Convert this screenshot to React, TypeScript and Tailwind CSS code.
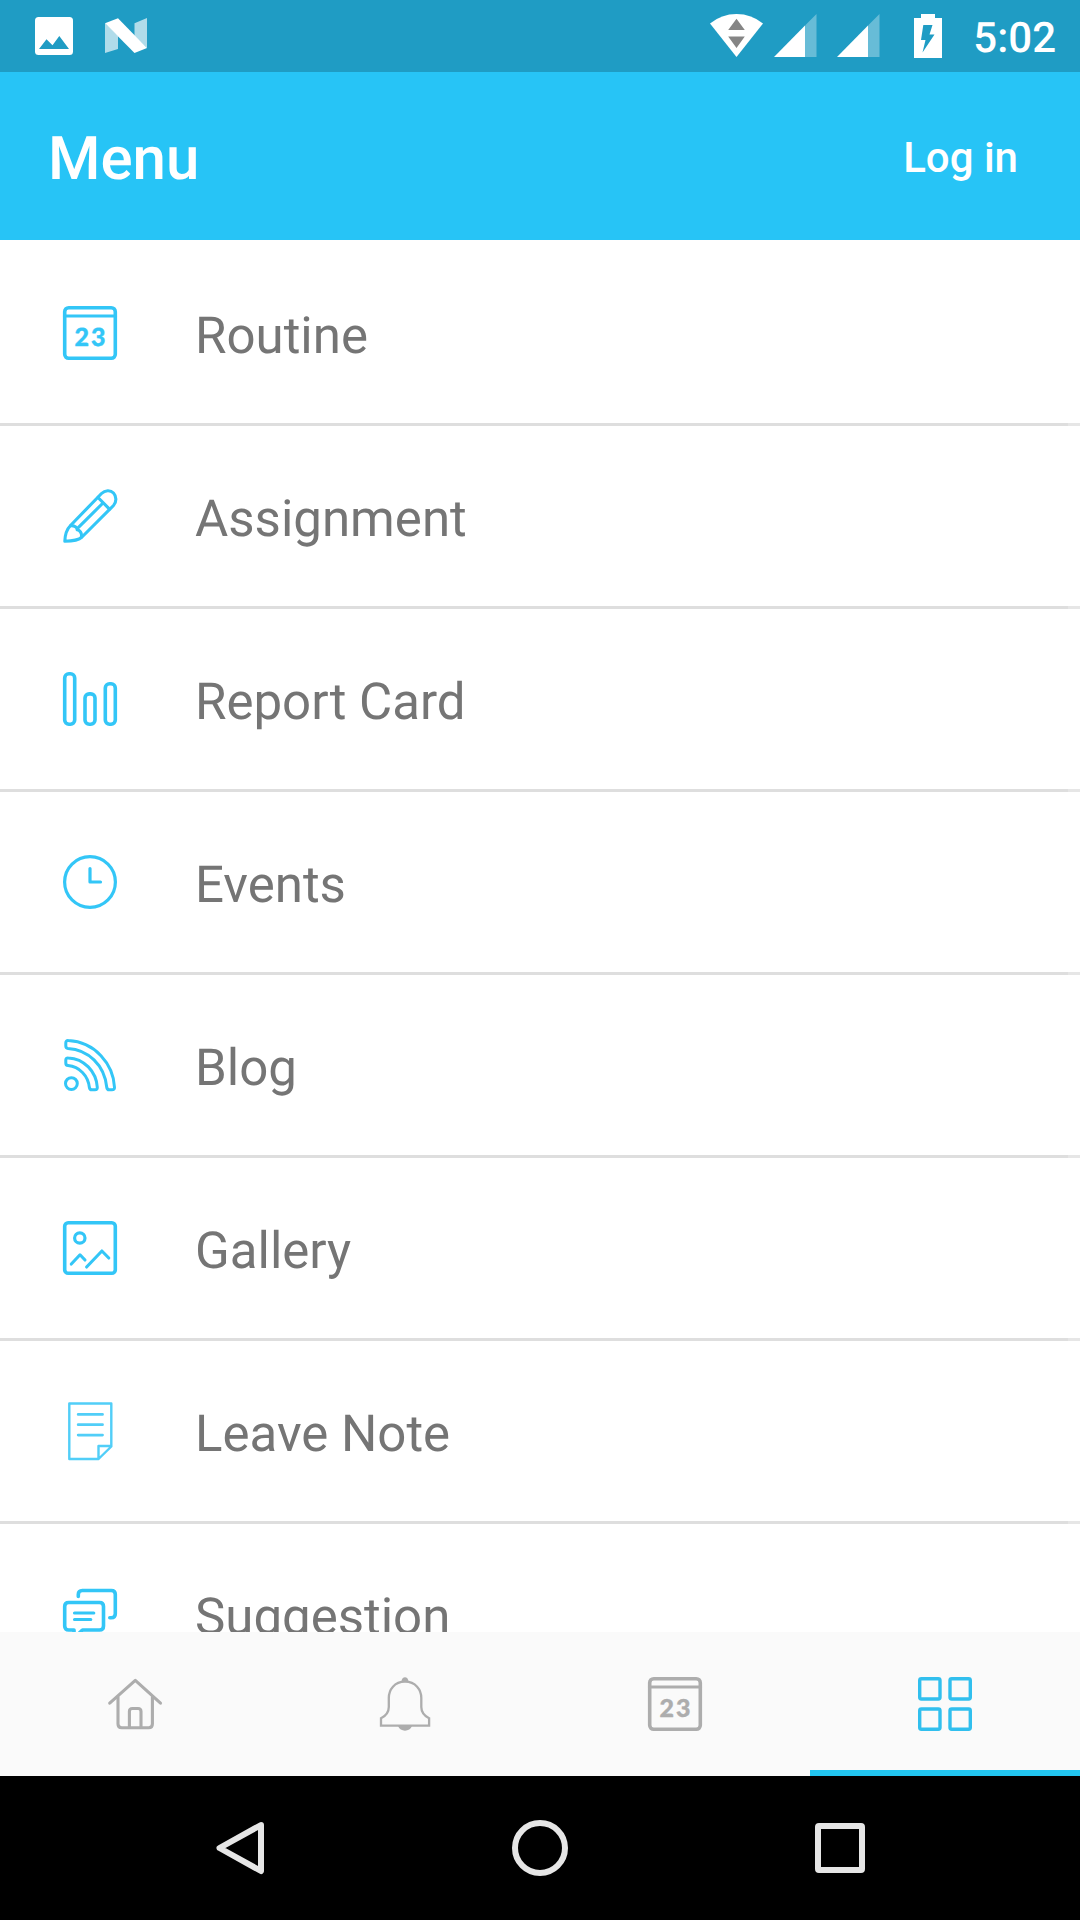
import type { ReactNode } from "react";

type IconProps = { width?: number; children: ReactNode; className?: string };

function Icon({ width = 3.6, children, className = "" }: IconProps) {
  return (
    <svg
      viewBox="0 0 60 60"
      className={`h-[60px] w-[60px] shrink-0 ${className}`}
      fill="none"
      stroke="currentColor"
      strokeWidth={width}
      strokeLinecap="round"
      strokeLinejoin="round"
    >
      {children}
    </svg>
  );
}

const CalendarIcon = () => (
  <Icon>
    <rect x="4.7" y="4.7" width="50.6" height="50.6" rx="4" />
    <path d="M4.5 13H55.5" strokeWidth="3.2" />
    <text
      x="14.4"
      y="43.3"
      fontSize="25"
      fontWeight="900"
      letterSpacing="2.2"
      fontFamily="Lato, sans-serif"
      fill="currentColor"
      strokeWidth="0.4"
    >
      23
    </text>
  </Icon>
);

const PencilIcon = () => (
  <Icon width={3.1}>
    <path d="M10.5 39.5 41.5 7.5C45 4 50.5 3.8 53.5 7S56.8 16 53.5 19.5L22 51C19 53.8 11 55.2 4.8 55.3C5 49.5 7 43 10.5 39.5Z" />
    <path d="M38 11.5 49.5 23.2M43 17 17 42.8M10.5 39.7C14.5 39.5 17 41 17.2 43.8C20.2 44.5 21.8 47 21.6 51" />
  </Icon>
);

const BarsIcon = () => (
  <Icon>
    <rect x="4.7" y="4.7" width="10" height="50.6" rx="4.2" />
    <rect x="25" y="24.9" width="10" height="30.4" rx="4.2" />
    <rect x="45.3" y="14.8" width="10" height="40.5" rx="4.2" />
  </Icon>
);

const ClockIcon = () => (
  <Icon width={3.2}>
    <circle cx="30" cy="30" r="25.4" />
    <path d="M30 16.5V30H40.5" />
  </Icon>
);

const FeedIcon = () => (
  <Icon width={3}>
    <circle cx="11.4" cy="48.6" r="5.9" />
    <path d="M8.3 5.6C35 7 53.3 29 54.5 52.3Q54.6 54.8 52 54.8H49.2Q47 54.8 46.7 52C44.5 30 28 14.5 8 13.4Q5.8 13.2 5.8 11V7.8Q5.8 5.4 8.3 5.6Z" />
    <path d="M8.3 22.9C24 23.5 36.3 36.5 37.3 52.3Q37.4 54.8 35 54.8H32Q29.7 54.8 29.4 52.5C28 40.5 19.5 31.7 8 30.6Q5.8 30.4 5.8 28V25Q5.8 22.7 8.3 22.9Z" />
  </Icon>
);

const PictureIcon = () => (
  <Icon>
    <rect x="4.7" y="4.7" width="50.6" height="50.6" rx="3.5" />
    <circle cx="19.8" cy="20" r="5.2" strokeWidth="3.2" />
    <path d="M11.3 46 20 36.8 25 42M26.6 49 41.9 33 48.8 40" strokeWidth="3.1" />
  </Icon>
);

const NoteIcon = () => (
  <Icon width={2.4} className="opacity-85">
    <path d="M9.3 2.5H51.3V45.5L38.5 58H9.3ZM38.5 58V45H51.3" />
    <path d="M18.2 13.4H42.5M18.2 23.7H42.5M18.2 34.1H42.5" strokeWidth="2.8" />
  </Icon>
);

const ChatIcon = () => (
  <Icon>
    <path d="M18.3 12.5V10.5Q18.3 6.5 22.3 6.5H51.3Q55.3 6.5 55.3 10.5V29.7Q55.3 33.7 51.3 33.7H49.8" />
    <path d="M14 54V46H8.7Q4.7 46 4.7 42V22.5Q4.7 18.5 8.7 18.5H39.5Q43.5 18.5 43.5 22.5V42Q43.5 46 39.5 46H22.5Z" />
    <path d="M14.5 29H33.8M14.5 35.5H30.8" strokeWidth="3.1" />
  </Icon>
);

const HomeIcon = () => (
  <Icon width={3.1}>
    <path d="M4.7 29.2 30.3 6.4 55.5 29.2" />
    <path d="M13 23V50Q13 53.7 16.7 53.7H43.7Q47.4 53.7 47.4 50V23" />
    <path d="M24.4 53.5V37.5Q24.4 34.5 27.4 34.5H33Q36 34.5 36 37.5V53.5" />
  </Icon>
);

const BellIcon = () => (
  <Icon width={2.3}>
    <path
      d="M30 7.7C19.5 7.7 13.8 15.5 13.8 24V33C13.8 38.5 11.5 41.5 6 44.3V51.6H54.1V44.3C48.8 41.5 46.3 38.5 46.3 33V24C46.3 15.5 40.5 7.7 30 7.7Z"
      strokeLinejoin="miter"
    />
    <path d="M26.5 7.5C26.7 1.8 33.3 1.8 33.5 7.5ZM23 52H37C35 58.2 25 58.2 23 52Z" fill="currentColor" stroke="none" />
  </Icon>
);

const GridIcon = () => (
  <Icon width={3.4}>
    <rect x="4.7" y="4.7" width="20.3" height="20.3" rx="1.7" />
    <rect x="35" y="4.7" width="20.3" height="20.3" rx="1.7" />
    <rect x="4.7" y="35" width="20.3" height="20.3" rx="1.7" />
    <rect x="35" y="35" width="20.3" height="20.3" rx="1.7" />
  </Icon>
);

const Signal = () => (
  <svg viewBox="0 0 43 43" className="h-[43px] w-[43px]" fill="#fff">
    <path d="M31 11.5 42.5 0V43H31Z" opacity=".32" />
    <path d="M0 43 31 11.5V43Z" />
  </svg>
);

function StatusBar() {
  return (
    <div className="flex h-[72px] items-start bg-[#1f9cc4] pl-[35px] pr-[24px]">
      <svg viewBox="0 0 38 38" className="mt-[17px] h-[38px] w-[38px]">
        <rect width="38" height="38" rx="3.5" fill="#fff" />
        <path d="M4 32 11.5 22.3 17.5 28.3 24.3 19 34 32Z" fill="#1f9cc4" />
      </svg>
      <svg viewBox="0 0 42 35" className="ml-[32px] mt-[18px] h-[35px] w-[42px]" fill="#fff">
        <path d="M0 5.2 13 18V31L0 35ZM29.5 5.2 42 0V30L29.5 18Z" opacity=".65" />
        <path d="M0 5.2 13 .3 42 30 29.5 35Z" />
      </svg>
      <div className="ml-auto flex items-start">
        <svg viewBox="0 0 53 43" className="mt-[14px] h-[43px] w-[53px]">
          <path d="M0 9.5Q11.5 0 26.5 0T53 9.5L26.5 43Z" fill="#fff" />
          <path d="M26.5 4.8 34.8 16H18.2ZM18.2 22.5H34.8L26.5 34Z" fill="#858585" />
        </svg>
        <div className="ml-[11px] mt-[14px] flex gap-5">
          <Signal />
          <Signal />
        </div>
        <svg viewBox="0 0 28 44" className="ml-[34px] mt-[14px] h-[44px] w-[28px]">
          <path d="M7 0H21V4H28V44H0V4H7Z" fill="#fff" />
          <path d="M9.3 11H18.5L15.5 20.5H20.5L8.5 38.5 11.5 26H7Z" fill="#1f9cc4" />
        </svg>
        <span className="ml-[31px] mt-[15px] text-[42px] font-medium leading-[48px] text-white">5:02</span>
      </div>
    </div>
  );
}

const items = [
  { label: "Routine", icon: <CalendarIcon /> },
  { label: "Assignment", icon: <PencilIcon /> },
  { label: "Report Card", icon: <BarsIcon /> },
  { label: "Events", icon: <ClockIcon /> },
  { label: "Blog", icon: <FeedIcon /> },
  { label: "Gallery", icon: <PictureIcon /> },
  { label: "Leave Note", icon: <NoteIcon /> },
  { label: "Suggestion", icon: <ChatIcon /> },
];

const tabs = [
  { name: "Home", icon: <HomeIcon /> },
  { name: "Notifications", icon: <BellIcon /> },
  { name: "Calendar", icon: <CalendarIcon /> },
  { name: "Menu", icon: <GridIcon />, active: true },
];

export default function App() {
  return (
    <div className="flex h-[1920px] w-[1080px] flex-col overflow-hidden bg-white font-['Roboto',sans-serif] [text-rendering:geometricPrecision]">
      <StatusBar />
      <header className="flex h-[168px] items-center justify-between bg-[#27c4f6] pl-[48px] pr-[62px] text-white">
        <h1 className="pt-[6px] text-[60px] font-medium leading-none">Menu</h1>
        <button className="pt-[3px] text-[42px] font-medium leading-none">Log in</button>
      </header>
      <ul className="h-[1392px] shrink-0 overflow-hidden bg-white pt-[3px]">
        {items.map((item) => (
          <li key={item.label} className="h-[183px]">
            <div className="flex h-[180px] items-center pl-[60px] text-[#33c6f7]">
              {item.icon}
              <span className="ml-[75px] pt-[8px] text-[51px] leading-[60px] text-[#757575]">{item.label}</span>
            </div>
            <div className="flex h-[3px]">
              <div className="grow bg-[#dedede]" />
              <div className="w-[12px] bg-[#e6e6e6]" />
            </div>
          </li>
        ))}
      </ul>
      <nav className="grid h-[144px] shrink-0 grid-cols-4 bg-[#fafafa]">
        {tabs.map((tab) => (
          <button
            key={tab.name}
            aria-label={tab.name}
            className={
              tab.active
                ? "flex items-center justify-center border-b-[6px] border-[#22c5f0] pt-[6px] text-[#31bfee]"
                : "flex items-center justify-center text-[#adadad]"
            }
          >
            {tab.icon}
          </button>
        ))}
      </nav>
      <div className="flex h-[144px] shrink-0 items-center bg-black pl-[210px]">
        <Icon width={6}>
          <path d="M51 7 9.5 30 51 53Z" stroke="#e6e6e6" />
        </Icon>
        <Icon width={6} className="ml-[240px]">
          <circle cx="30" cy="30" r="25" stroke="#e6e6e6" />
        </Icon>
        <Icon width={6} className="ml-[240px]">
          <rect x="8" y="8" width="44" height="44" rx="1" stroke="#e6e6e6" />
        </Icon>
      </div>
    </div>
  );
}
